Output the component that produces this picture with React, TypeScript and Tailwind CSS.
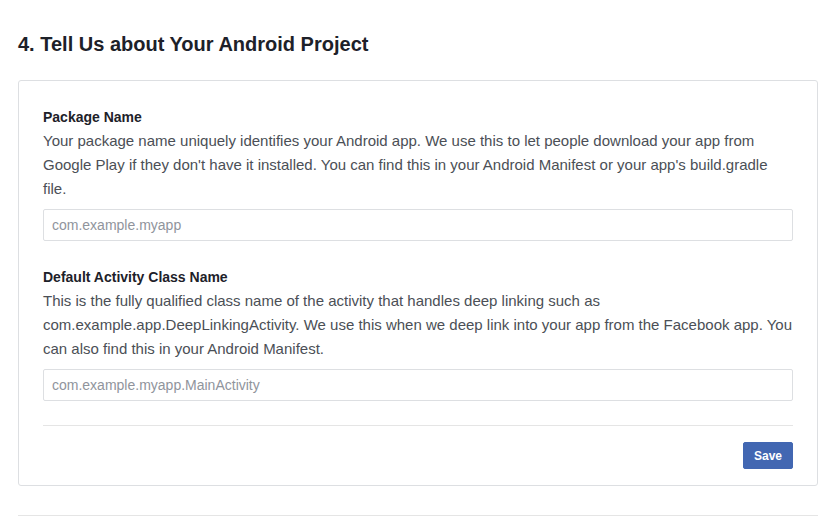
export default function App() {
  return (
    <div
      className="min-h-[519px] w-[836px] bg-white px-[18px] pt-[32px] text-[#1d2129]"
      style={{ fontFamily: '"Liberation Sans", Arial, sans-serif' }}
    >
      <h2 className="text-[20px] font-bold leading-[24px]">4. Tell Us about Your Android Project</h2>

      <div className="mt-[24px] rounded-[3px] border border-[#dddfe2] px-[24px] pt-[24px] pb-[16px]">
        <div className="leading-[24px]">
          <label className="block text-[14px] font-bold text-[#1d2129]">Package Name</label>
          <p className="text-[15px] text-[#4b4f56]">
            Your package name uniquely identifies your Android app. We use this to let people download your app from
            Google Play if they don't have it installed. You can find this in your Android Manifest or your app's
            build.gradle file.
          </p>
        </div>
        <input
          type="text"
          placeholder="com.example.myapp"
          className="mt-[8px] block h-[32px] w-full rounded-[2px] border border-[#dddfe2] px-[8px] text-[14px] text-[#1d2129] outline-none placeholder:text-[#90949c]"
        />

        <div className="mt-[24px] leading-[24px]">
          <label className="block text-[14px] font-bold text-[#1d2129]">Default Activity Class Name</label>
          <p className="text-[15px] text-[#4b4f56]">
            This is the fully qualified class name of the activity that handles deep linking such as
            com.example.app.DeepLinkingActivity. We use this when we deep link into your app from the Facebook app. You
            can also find this in your Android Manifest.
          </p>
        </div>
        <input
          type="text"
          placeholder="com.example.myapp.MainActivity"
          className="mt-[8px] block h-[32px] w-full rounded-[2px] border border-[#dddfe2] px-[8px] text-[14px] text-[#1d2129] outline-none placeholder:text-[#90949c]"
        />

        <div className="mt-[24px] flex justify-end border-t border-[#e5e5e5] pt-[16px]">
          <button className="h-[27px] w-[50px] rounded-[2px] border border-[#4267b2] bg-[#4267b2] text-[12px] font-bold text-white">
            Save
          </button>
        </div>
      </div>

      <div className="mt-[29px] border-t border-[#e5e5e5]" />
    </div>
  );
}
